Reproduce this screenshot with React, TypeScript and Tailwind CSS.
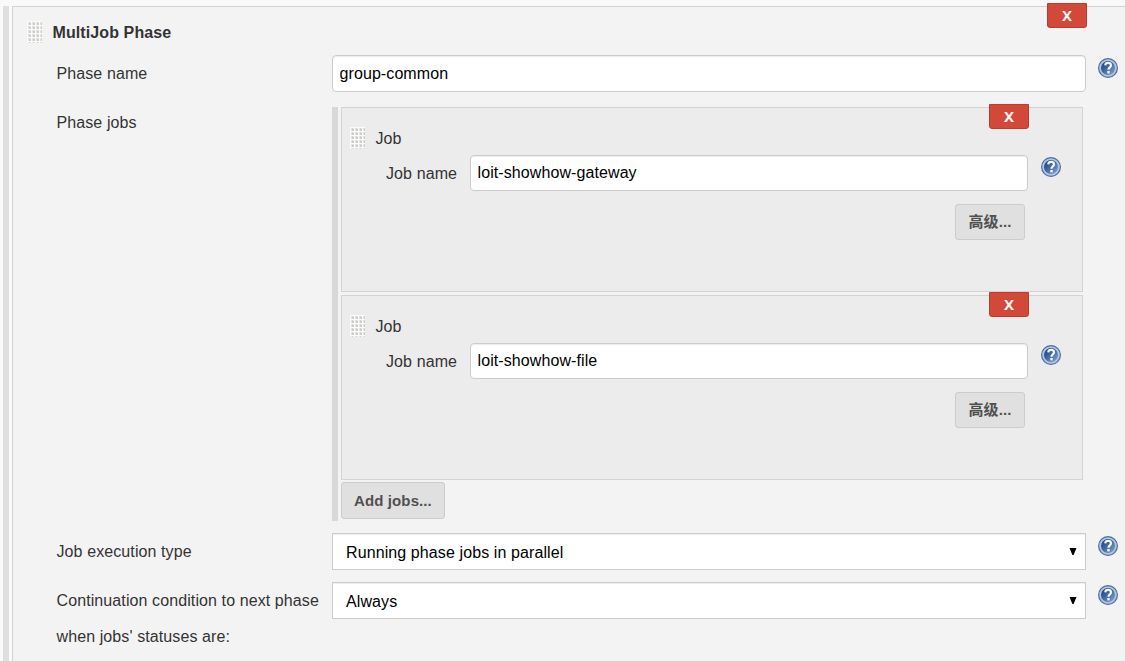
import React from 'react';

function Grip() {
  return (
    <svg width="15" height="22" viewBox="0 0 15 22" className="shrink-0" shapeRendering="crispEdges">
      <defs>
        <pattern id="grip" width="4" height="4" patternUnits="userSpaceOnUse" x="1" y="1">
          <rect width="4" height="4" fill="#fbfbfb" />
          <rect width="3" height="3" fill="#e4e3e0" />
          <rect x="1" y="1" width="2" height="2" fill="#cfcdc9" />
          <rect x="1" y="0" width="1" height="1" fill="#dad8d5" />
        </pattern>
      </defs>
      <rect width="15" height="22" fill="url(#grip)" />
    </svg>
  );
}

function Help() {
  return (
    <svg width="20" height="20" viewBox="0 0 20 20" className="shrink-0">
      <defs>
        <linearGradient id="disc" x1="0" y1="0" x2="1" y2="1">
          <stop offset="0.25" stopColor="#285291" />
          <stop offset="1" stopColor="#86a5cf" />
        </linearGradient>
      </defs>
      <circle cx="10" cy="10" r="9.4" fill="#b4c5de" stroke="#4a6fa5" strokeWidth="1.2" />
      <circle cx="10" cy="10" r="7" fill="url(#disc)" />
      <path d="M7.200 7.300C7.400 5.600 8.500 4.900 10.100 4.900c1.700 0 2.900.8 2.900 2.400 0 2-2.500 2.100-2.500 4.400" fill="none" stroke="#f4f6fa" strokeWidth="2.200" />
      <rect x="9.300" y="13" width="2.400" height="2.400" fill="#f4f6fa" />
    </svg>
  );
}

function Remove() {
  return (
    <button className="h-[25px] w-10 rounded-b-[3px] border border-[#bd3b2f] bg-[#d24939] text-[15px] leading-[23px] font-bold text-[#f3f3f3] [font-family:'Noto_Sans','Open_Sans',sans-serif]">
      X
    </button>
  );
}

function Field({ value, className }: { value: string; className: string }) {
  return (
    <input
      readOnly
      value={value}
      className={`rounded-[4px] border border-[#ccc] bg-white px-[6.5px] tracking-[0.09px] text-black shadow-[inset_0_1px_1px_rgba(0,0,0,0.075)] outline-none ${className}`}
    />
  );
}

function Choice({ value }: { value: string }) {
  return (
    <div className="flex h-[37px] w-[754px] items-center justify-between border border-[#ccc] bg-white pr-2 pl-[13px] text-black shadow-[inset_0_1px_1px_rgba(0,0,0,0.075)]">
      <span className="pt-[2px]">{value}</span>
      <svg width="8" height="7" viewBox="0 0 8 7">
        <path d="M0.500 0h7L4.600 7H3.400z" fill="#000" />
      </svg>
    </div>
  );
}

function Job({ name }: { name: string }) {
  return (
    <section className="relative h-[185px] w-[742px] border border-[#d3d3d3] bg-[#ececec]">
      <div className="absolute -top-1 right-[53px] flex">
        <Remove />
      </div>
      <div className="flex items-center gap-[10.5px] pt-[19px] pl-2">
        <Grip />
        <span className="h-[22px] leading-[23px]">Job</span>
      </div>
      <div className="mt-[6px] flex pl-[44px]">
        <span className="w-[84px] leading-[37px]">Job name</span>
        <Field value={name} className="h-9 w-[558px]" />
        <div className="ml-[13px] pt-[2px]">
          <Help />
        </div>
      </div>
      <div className="mt-3 flex justify-end pr-[57px]">
        <button className="h-9 w-[70px] rounded-[3px] border border-[#ccc] bg-[#e0e0e0] text-[15px] font-bold text-[#505050] [font-family:'Liberation_Sans','Noto_Sans_CJK_SC',sans-serif]">
          高级...
        </button>
      </div>
    </section>
  );
}

export default function App() {
  return (
    <main className="flex h-[661px] w-[1125px] gap-[3px] overflow-hidden bg-[#f9f9f9] pt-[6px] pl-[3px] text-[16px] tracking-[0.1px] text-[#333] [font-family:'Liberation_Sans',Arial,sans-serif]">
      <div className="w-[6px] bg-[#dfdfdf]" />
      <section className="relative flex-1 border-t border-l border-[#d3d3d3] bg-[#f3f3f3]">
        <div className="absolute -top-1 right-[38px] flex">
          <Remove />
        </div>
        <header className="flex items-center gap-[10.5px] pt-[14px] pl-[14px]">
          <Grip />
          <h2 className="h-[22px] leading-[23px] font-bold">MultiJob Phase</h2>
        </header>
        <div className="mt-3 flex pl-[43px]">
          <span className="w-[276px] pl-[0.5px] leading-[37px]">Phase name</span>
          <Field value="group-common" className="h-[37px] w-[754px]" />
          <div className="ml-3 pt-[3px]">
            <Help />
          </div>
        </div>
        <div className="mt-[15px] flex pl-[43px]">
          <span className="w-[276px] pl-[0.5px] leading-[31px]">Phase jobs</span>
          <div className="flex h-[414px] gap-[3px]">
            <div className="w-[6px] bg-[#d8d8d8]" />
            <div className="flex flex-col items-start">
              <Job name="loit-showhow-gateway" />
              <div className="h-[3px]" />
              <Job name="loit-showhow-file" />
              <button className="mt-[2px] h-[37px] w-[104px] rounded-[3px] border border-[#ccc] bg-[#e0e0e0] pt-[2px] text-[15px] font-bold text-[#505050]">
                Add jobs...
              </button>
            </div>
          </div>
        </div>
        <div className="mt-3 flex pl-[43px]">
          <span className="w-[276px] pl-[0.5px] leading-[37px]">Job execution type</span>
          <Choice value="Running phase jobs in parallel" />
          <div className="ml-3 pt-[3px]">
            <Help />
          </div>
        </div>
        <div className="mt-3 flex pl-[43px]">
          <span className="w-[276px] pt-px pl-[0.5px] leading-[36px]">
            Continuation condition to next phase
            <br />
            when jobs' statuses are:
          </span>
          <Choice value="Always" />
          <div className="ml-3 pt-[3px]">
            <Help />
          </div>
        </div>
      </section>
    </main>
  );
}
